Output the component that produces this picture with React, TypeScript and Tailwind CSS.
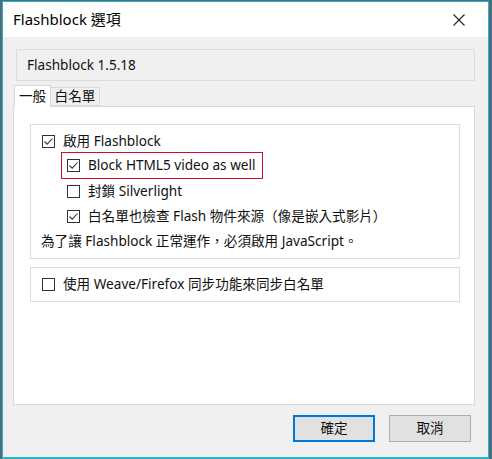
import React from "react";

const font = "font-['Noto_Sans','Noto_Sans_CJK_TC',sans-serif]";

const Check = ({ checked }: { checked?: boolean }) => (
    <svg width="13" height="13" viewBox="0 0 13 13" className="shrink-0">
        <rect x="0.5" y="0.5" width="12" height="12" fill="#fff" stroke="#333" />
        {checked && <path d="M2.5 6.5 L5.2 9.2 L10.5 3.5" fill="none" stroke="#333" strokeWidth="1.1" />}
    </svg>
);

const Row = ({ checked, label, indent }: { checked?: boolean; label: string; indent?: boolean }) => (
    <div className={`h-[25px] flex items-center gap-[8px] ${indent ? "pl-[36px]" : "pl-[11px]"}`}>
        <Check checked={checked} />
        <span>{label}</span>
    </div>
);

export default function App() {
    return (
        <div className={`w-[492px] h-[459px] bg-[#4d6d7d] pt-px pl-[2px] ${font} text-[13.6px] text-[#111] overflow-hidden`}>
            <div className="w-[487px] h-[458px] border border-b-2 border-[#26b6c8] bg-[#f0f0f0] flex flex-col">
                {/* title bar */}
                <div className="h-[35px] bg-white flex items-center justify-between pl-[10px] pr-[23px] shrink-0">
                    <span className="text-[15px] text-black">Flashblock 選項</span>
                    <svg width="12" height="12" viewBox="0 0 12 12">
                        <path d="M0.5 0.5 L11.5 11.5 M11.5 0.5 L0.5 11.5" stroke="#222" strokeWidth="1.1" />
                    </svg>
                </div>

                <div className="flex-1 flex flex-col pl-[10px] pr-[13px]">
                    <div className="ml-[3px] mt-[12px] h-[32px] border border-[#dcdcdc] flex items-center pl-[10px]">
                        Flashblock 1.5.18
                    </div>

                    {/* tabs */}
                    <div className="mt-[4px] flex items-end h-[22px] pl-[1px] relative z-10">
                        <div className="h-[22px] w-[37px] bg-white border border-b-0 border-[#d9d9d9] flex items-center justify-center">
                            一般
                        </div>
                        <div className="h-[19px] w-[49px] bg-[#f0f0f0] border border-l-0 border-[#d9d9d9] flex items-center justify-center mb-px">
                            白名單
                        </div>
                    </div>

                    {/* panel */}
                    <div className="-mt-px h-[299px] bg-white border border-[#d9d9d9] pl-[16px] pr-[14px] pt-[17px]">
                        <div className="border border-[#dcdcdc] py-[4px]">
                            <Row checked label="啟用 Flashblock" />
                            <div className="h-[25px] flex items-center pl-[30px]">
                                <div className="h-[27px] -mt-[3px] border border-[#c8102e] flex items-center gap-[8px] pl-[5px] pr-[6px]">
                                    <Check checked />
                                    <span>Block HTML5 video as well</span>
                                </div>
                            </div>
                            <Row indent label="封鎖 Silverlight" />
                            <Row indent checked label="白名單也檢查 Flash 物件來源（像是嵌入式影片）" />
                            <div className="h-[25px] flex items-center pl-[10px]">
                                為了讓 Flashblock 正常運作，必須啟用 JavaScript。
                            </div>
                        </div>

                        <div className="mt-[8px] h-[35px] border border-[#dcdcdc] flex items-center">
                            <Row label="使用 Weave/Firefox 同步功能來同步白名單" />
                        </div>
                    </div>

                    {/* buttons */}
                    <div className="mt-[10px] flex justify-end gap-[14px] pr-[4px]">
                        <button className="w-[82px] h-[27px] bg-[#e1e1e1] border-2 border-[#0078d7] flex items-center justify-center">
                            確定
                        </button>
                        <button className="w-[82px] h-[27px] bg-[#e1e1e1] border border-[#adadad] flex items-center justify-center">
                            取消
                        </button>
                    </div>
                </div>
            </div>
        </div>
    );
}
